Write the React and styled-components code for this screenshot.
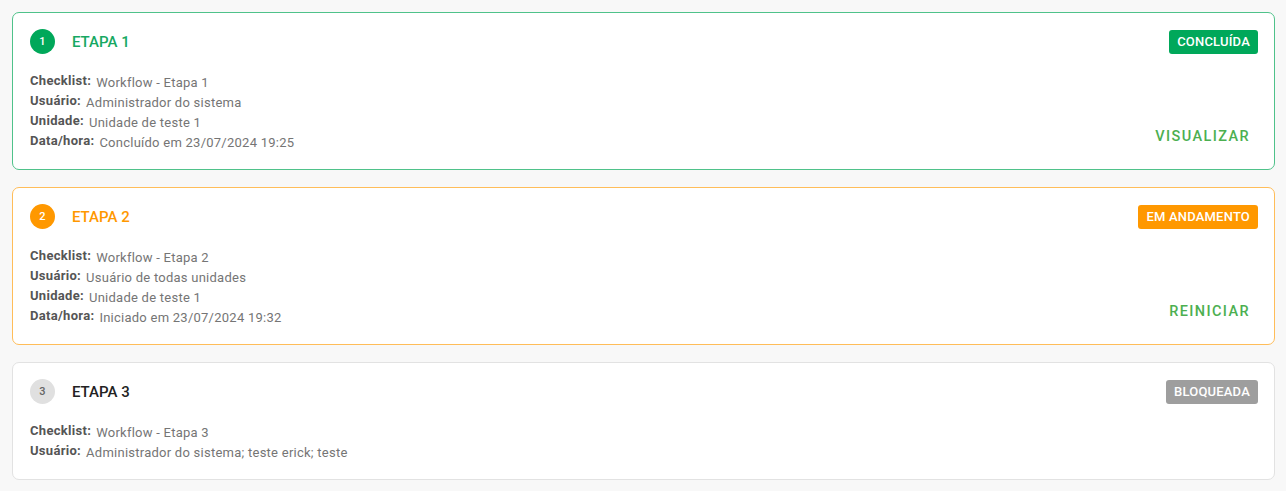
import React from 'react';
import styled, { createGlobalStyle } from 'styled-components';

const GlobalStyle = createGlobalStyle`
  body {
    margin: 0;
    background: #f8f8f8;
    font-family: Roboto, "Liberation Sans", sans-serif;
  }
`;

const colors = {
  done: { main: '#00a85a', border: '#4fc28a', title: '#16a862', circleText: '#fff' },
  progress: { main: '#ff9800', border: '#ffbd59', title: '#ff9800', circleText: '#fff' },
  blocked: { main: '#9e9e9e', border: '#e2e2e2', title: '#222', circle: '#e0e0e0', circleText: '#666' },
};

const List = styled.div`
  display: flex;
  flex-direction: column;
  gap: 17px;
  padding: 12px 11px 12px 12px;
`;

const Card = styled.div`
  background: #fff;
  border: 1px solid ${p => colors[p.$status].border};
  border-radius: 7px;
  padding: 16px 16px 16px 17px;
  display: flex;
  flex-direction: column;
`;

const Header = styled.div`
  display: flex;
  align-items: center;
  height: 25px;
`;

const Circle = styled.div`
  width: 25px;
  height: 25px;
  border-radius: 50%;
  background: ${p => colors[p.$status].circle || colors[p.$status].main};
  color: ${p => colors[p.$status].circleText};
  font-size: 11px;
  font-weight: 500;
  display: flex;
  align-items: center;
  justify-content: center;
`;

const Title = styled.div`
  margin-left: 17px;
  font-size: 15px;
  font-weight: 500;
  color: ${p => colors[p.$status].title};
  flex: 1;
`;

const Badge = styled.div`
  background: ${p => colors[p.$status].main};
  color: #fff;
  font-size: 13px;
  font-weight: 500;
  letter-spacing: 0.2px;
  border-radius: 3px;
  padding: 0 8px;
  height: 24px;
  line-height: 24px;
  text-transform: uppercase;
`;

const Body = styled.div`
  display: flex;
  align-items: flex-end;
  margin-top: 19px;
`;

const Rows = styled.div`
  flex: 1;
  display: flex;
  flex-direction: column;
`;

const Row = styled.div`
  display: flex;
  align-items: flex-start;
  height: 20px;
`;

const Label = styled.span`
  font-size: 13px;
  font-weight: 700;
  letter-spacing: 0.3px;
  color: #555;
  margin-right: 5px;
`;

const Value = styled.span`
  font-size: 13px;
  color: #757575;
  padding-top: 2px;
  letter-spacing: 0.25px;
`;

const Action = styled.button`
  border: none;
  background: none;
  color: #4caf50;
  font-family: Roboto, "Liberation Sans", sans-serif;
  font-size: 14.5px;
  font-weight: 500;
  letter-spacing: 1.4px;
  padding: 0 8px;
  margin-bottom: 8px;
  cursor: pointer;
`;

const steps = [
  {
    n: 1, status: 'done', badge: 'Concluída', action: 'Visualizar',
    rows: [
      ['Checklist:', 'Workflow - Etapa 1'],
      ['Usuário:', 'Administrador do sistema'],
      ['Unidade:', 'Unidade de teste 1'],
      ['Data/hora:', 'Concluído em 23/07/2024 19:25'],
    ],
  },
  {
    n: 2, status: 'progress', badge: 'Em andamento', action: 'Reiniciar',
    rows: [
      ['Checklist:', 'Workflow - Etapa 2'],
      ['Usuário:', 'Usuário de todas unidades'],
      ['Unidade:', 'Unidade de teste 1'],
      ['Data/hora:', 'Iniciado em 23/07/2024 19:32'],
    ],
  },
  {
    n: 3, status: 'blocked', badge: 'Bloqueada',
    rows: [
      ['Checklist:', 'Workflow - Etapa 3'],
      ['Usuário:', 'Administrador do sistema; teste erick; teste'],
    ],
  },
];

function Step({ step }) {
  return (
    <Card $status={step.status}>
      <Header>
        <Circle $status={step.status}>{step.n}</Circle>
        <Title $status={step.status}>ETAPA {step.n}</Title>
        <Badge $status={step.status}>{step.badge}</Badge>
      </Header>
      <Body>
        <Rows>
          {step.rows.map(r => (
            <Row key={r[0]}>
              <Label>{r[0]}</Label>
              <Value>{r[1]}</Value>
            </Row>
          ))}
        </Rows>
        {step.action ? <Action>{step.action.toUpperCase()}</Action> : null}
      </Body>
    </Card>
  );
}

export default function App() {
  return (
    <>
      <GlobalStyle />
      <List>
        {steps.map(s => <Step key={s.n} step={s} />)}
      </List>
    </>
  );
}
